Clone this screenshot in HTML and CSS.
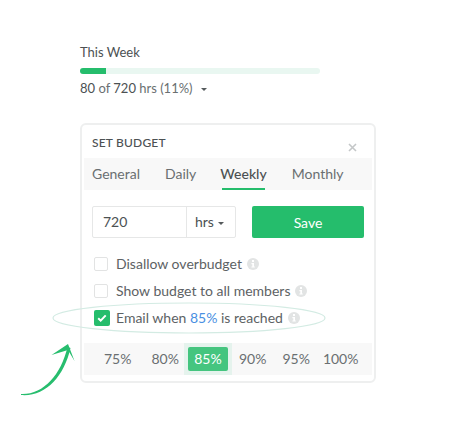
FILE: index.html
```html
<!DOCTYPE html>
<html lang="en">
<head>
<meta charset="utf-8">
<title>Set budget</title>
<link rel="stylesheet" href="styles.css">
</head>
<body>
<main class="page">
  <section class="week">
    <div class="week-title">This Week</div>
    <div class="bar"><div class="bar-fill"></div></div>
    <div class="week-sum"><b>80</b> of <b>720</b> hrs (11%) <span class="caret caret-wide"></span></div>
  </section>
  <section class="card">
    <header class="card-head">
      <h2>SET BUDGET</h2>
      <svg class="close" width="9" height="9" viewBox="0 0 9 9"><path d="M1 1l7 7M8 1L1 8" stroke="#c4c7c8" stroke-width="1.6"/></svg>
    </header>
    <nav class="tabs">
      <span class="tab">General</span>
      <span class="tab tab-daily">Daily</span>
      <span class="tab active">Weekly</span>
      <span class="tab">Monthly</span>
    </nav>
    <div class="form-row">
      <div class="field">
        <span class="field-value">720</span>
        <span class="field-unit">hrs <span class="caret"></span></span>
      </div>
      <button class="save">Save</button>
    </div>
    <ul class="options">
      <li class="option"><span class="check"></span>Disallow overbudget<svg class="info" viewBox="0 0 12 12"><circle cx="6" cy="6" r="6" fill="#e2e4e4"/><rect x="5" y="2" width="2" height="2" fill="#fff"/><path d="M4.4 5h2.6v3.4h.8V9.600H4.400V8.400h.9V6.200h-.9z" fill="#fff"/></svg></li>
      <li class="option"><span class="check"></span>Show budget to all members<svg class="info" viewBox="0 0 12 12"><circle cx="6" cy="6" r="6" fill="#e2e4e4"/><rect x="5" y="2" width="2" height="2" fill="#fff"/><path d="M4.4 5h2.6v3.4h.8V9.600H4.400V8.400h.9V6.200h-.9z" fill="#fff"/></svg></li>
      <li class="option"><span class="check checked"><svg width="10" height="8" viewBox="0 0 10 8"><path d="M1.200 4.200l2.500 2.400 5-5.200" fill="none" stroke="#fff" stroke-width="2"/></svg></span>Email when&nbsp;<span class="pct">85%</span>&nbsp;is reached<svg class="info" viewBox="0 0 12 12"><circle cx="6" cy="6" r="6" fill="#e2e4e4"/><rect x="5" y="2" width="2" height="2" fill="#fff"/><path d="M4.4 5h2.6v3.4h.8V9.600H4.400V8.400h.9V6.200h-.9z" fill="#fff"/></svg></li>
    </ul>
    <div class="percents">
      <span class="p p75">75%</span>
      <span class="p p80">80%</span>
      <span class="p-sel"><span class="p-on">85%</span></span>
      <span class="p p90">90%</span>
      <span class="p p95">95%</span>
      <span class="p p100">100%</span>
    </div>
  </section>
</main>
<svg class="ellipse" width="276" height="34" viewBox="0 0 276 34"><ellipse cx="137" cy="16" rx="136" ry="15" fill="none" stroke="#d3ebe3" stroke-width="1.200"/></svg>
<svg class="arrow" width="58" height="56" viewBox="0 0 58 56"><path d="M1 52C23 53 41 33 47.500 5L50.500 6C44 35 25 55 1 53Z" fill="#27bd6e"/><path d="M31.500 13L48 2 54.500 19 48 8Z" fill="#27bd6e"/></svg>
</body>
</html>
```
FILE: styles.css
```css
* { box-sizing: border-box; }
html, body { margin: 0; padding: 0; background: #fff; }
body { width: 456px; height: 446px; position: relative; overflow: hidden; font-family: Lato, "Liberation Sans", sans-serif; color: #555a5c; }
.page { padding: 43px 80px 0; }
.week-title { font-size: 13px; line-height: 18px; color: #4c5153; }
.bar { width: 240px; height: 6px; margin-top: 7px; background: #e9f7f1; border-radius: 3px; overflow: hidden; }
.bar-fill { width: 26px; height: 6px; background: #25bd6c; }
.week-sum { margin-top: 5px; font-size: 13px; line-height: 18px; color: #6a6f71; }
.week-sum b { font-weight: 400; color: #4c5153; }
.caret { display: inline-block; width: 0; height: 0; border: 3.500px solid transparent; border-top: 3.500px solid #555a5c; border-bottom: 0; vertical-align: 2px; }
.caret-wide { margin-left: 5px; }
.card { margin-top: 26px; width: 296px; height: 260px; border: 2px solid #eeefef; border-radius: 6px; padding: 0 2px; background: #fff; }
.card-head { height: 33px; display: flex; align-items: center; justify-content: space-between; padding: 2px 15px 0 8px; }
.card-head h2 { margin: 0; font-size: 12px; font-weight: 500; line-height: 16px; letter-spacing: .2px; color: #4c5153; }
.close { margin-top: 9px; }
.tabs { height: 32px; background: #f8f8f8; display: flex; padding-left: 8px; font-size: 14px; line-height: 32px; color: #6a6f71; }
.tab { margin-right: 25px; height: 32px; }
.tab-daily { margin-right: 24px; }
.tab.active { font-weight: 500; color: #4c5153; position: relative; }
.tab.active::after { content: ""; position: absolute; left: 2px; right: 2px; bottom: 0; height: 2px; background: #25bd6c; }
.form-row { display: flex; align-items: stretch; justify-content: space-between; margin: 16px 8px 0; height: 32px; }
.field { width: 144px; display: flex; border: 1px solid #e6e7e7; border-radius: 2px; font-size: 14px; line-height: 30px; color: #4c5153; }
.field-value { width: 94px; padding-left: 10px; border-right: 1px solid #e6e7e7; }
.field-unit { padding-left: 8px; }
.save { width: 112px; border: 0; border-radius: 2px; background: #25bd6c; color: #fff; font: 400 14px Lato, sans-serif; padding: 0; }
.options { list-style: none; margin: 12px 0 0; padding: 0 0 0 10px; }
.option { height: 27px; display: flex; align-items: center; font-size: 14px; color: #5d6264; }
.check { flex: none; width: 14px; height: 14px; margin-right: 8px; border: 1px solid #e2e3e3; border-radius: 2px; display: flex; align-items: center; justify-content: center; }
.check.checked { width: 16px; height: 16px; margin-right: 6px; border: 0; background: #25bd6c; }
.pct { color: #4a90e2; }
.info { width: 12px; height: 12px; margin-left: 5px; }
.percents { height: 32px; margin-top: 12px; background: #f8f8f8; font-size: 14px; line-height: 32px; color: #6a6f71; display: flex; }
.p { flex: none; }
.p75 { margin-left: 20px; }
.p80 { margin-left: 20px; }
.p90 { margin-left: 7px; }
.p95 { margin-left: 16px; }
.p100 { margin-left: 13px; }
.p-sel { flex: none; width: 48px; height: 32px; margin-left: 5px; background: #e5f3ed; display: flex; align-items: center; justify-content: center; }
.p-on { width: 40px; height: 24px; line-height: 24px; background: #45c57f; border-radius: 2px; color: #fff; text-align: center; }
.ellipse { position: absolute; left: 52px; top: 302px; }
.arrow { position: absolute; left: 20px; top: 342px; }
```
